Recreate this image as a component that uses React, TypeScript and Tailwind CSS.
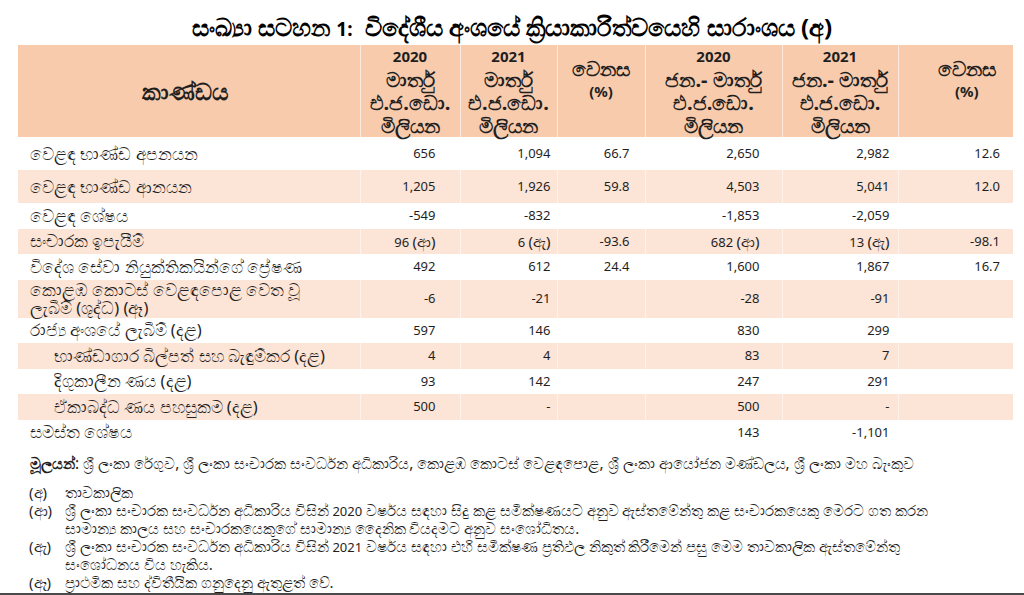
import React from "react";

type Row = {
  label: string[];
  indent?: boolean;
  shaded?: boolean;
  tall?: boolean;
  values: string[];
};

const rows: Row[] = [
  { label: ["වෙළඳ භාණ්ඩ අපනයන"], tall: true, values: ["656", "1,094", "66.7", "2,650", "2,982", "12.6"] },
  { label: ["වෙළඳ භාණ්ඩ ආනයන"], shaded: true, tall: true, values: ["1,205", "1,926", "59.8", "4,503", "5,041", "12.0"] },
  { label: ["වෙළඳ ශේෂය"], values: ["-549", "-832", "", "-1,853", "-2,059", ""] },
  { label: ["සංචාරක ඉපැයීම්"], shaded: true, values: ["96 (ආ)", "6 (ඇ)", "-93.6", "682 (ආ)", "13 (ඇ)", "-98.1"] },
  { label: ["විදේශ සේවා නියුක්තිකයින්ගේ ප්‍රේෂණ"], values: ["492", "612", "24.4", "1,600", "1,867", "16.7"] },
  { label: ["කොළඹ කොටස් වෙළඳපොළ වෙත වූ", "ලැබීම් (ශුද්ධ) (ඈ)"], shaded: true, values: ["-6", "-21", "", "-28", "-91", ""] },
  { label: ["රාජ්‍ය අංශයේ ලැබීම් (දළ)"], values: ["597", "146", "", "830", "299", ""] },
  { label: ["භාණ්ඩාගාර බිල්පත් සහ බැඳුම්කර (දළ)"], indent: true, shaded: true, values: ["4", "4", "", "83", "7", ""] },
  { label: ["දිගුකාලීන ණය (දළ)"], indent: true, values: ["93", "142", "", "247", "291", ""] },
  { label: ["ඒකාබද්ධ ණය පහසුකම (දළ)"], indent: true, shaded: true, values: ["500", "-", "", "500", "-", ""] },
  { label: ["සමස්ත ශේෂය"], values: ["", "", "", "143", "-1,101", ""] },
];

// right padding of each number column so figures line up as in the source
const numPad = ["pr-[24px]", "pr-[6px]", "pr-[15px]", "pr-[22px]", "pr-[8px]", "pr-[13px]"];

const notes = [
  ["(අ)", "තාවකාලික"],
  ["(ආ)", "ශ්‍රී ලංකා සංචාරක සංවර්ධන අධිකාරිය විසින් 2020 වර්ෂය සඳහා සිදු කළ සමීක්ෂණයට අනුව ඇස්තමේන්තු කළ සංචාරකයෙකු මෙරට ගත කරන සාමාන්‍ය කාලය සහ සංචාරකයෙකුගේ සාමාන්‍ය දෛනික වියදමට අනුව  සංශෝධිතය."],
  ["(ඇ)", "ශ්‍රී ලංකා සංචාරක සංවර්ධන අධිකාරිය විසින් 2021 වර්ෂය සඳහා එහි සමීක්ෂණ ප්‍රතිඵල නිකුත් කිරීමෙන් පසු මෙම තාවකාලික ඇස්තමේන්තු සංශෝධනය විය හැකිය."],
  ["(ඈ)", "ප්‍රාථමික සහ ද්විතීයික ගනුදෙනු ඇතුළත් වේ."],
];

// digits are set smaller than the sinhala script around them
function Mixed({ text, num = "text-[13px]" }: { text: string; num?: string }) {
  const parts = text.split(/(\d[\d,.]*)/);
  return (
    <>
      {parts.map((p, i) =>
        /^\d/.test(p) ? (
          <span key={i} className={num}>
            {p}
          </span>
        ) : (
          <React.Fragment key={i}>{p}</React.Fragment>
        )
      )}
    </>
  );
}

function HeadCell({ year, lines, className = "", big = false }: { year?: string; lines: string[]; className?: string; big?: boolean }) {
  return (
    <th className={`border-x border-white/60 text-center align-middle font-bold leading-[23px] ${className}`}>
      {year && <div className="text-[15px]">{year}</div>}
      {lines.map((l, i) => (
        <div key={i} className={l === "(%)" ? "text-[15px]" : big ? "text-[23px]" : "text-[20px]"}>
          {l}
        </div>
      ))}
    </th>
  );
}

export default function App() {
  return (
    <div className="w-[1024px] h-[595px] bg-white text-[#1f1f1f] font-['Noto_Sans','Open_Sans',sans-serif] overflow-hidden">
      <h1 className="pt-[12px] h-[45px] text-center text-[24px] font-bold leading-[30px] text-black">
        සංඛ්‍යා සටහන <span className="text-[19px]">1:</span>&nbsp; විදේශීය අංශයේ ක්‍රියාකාරිත්වයෙහි සාරාංශය (අ)
      </h1>

      <table className="ml-[18px] w-[995px] table-fixed border-collapse text-[13px]">
        <colgroup>
          <col className="w-[342px]" />
          <col className="w-[100px]" />
          <col className="w-[97px]" />
          <col className="w-[88px]" />
          <col className="w-[137px]" />
          <col className="w-[116px]" />
          <col className="w-[115px]" />
        </colgroup>
        <thead>
          <tr className="h-[91px] bg-[#f8cbad]">
            <HeadCell lines={["කාණ්ඩය"]} big className="border-l-0 pr-[6px]" />
            <HeadCell year="2020" lines={["මාර්තු", "එ.ජ.ඩො.", "මිලියන"]} />
            <HeadCell year="2021" lines={["මාර්තු", "එ.ජ.ඩො.", "මිලියන"]} />
            <HeadCell lines={["වෙනස", "(%)"]} className="pb-[22px]" />
            <HeadCell year="2020" lines={["ජන.- මාර්තු", "එ.ජ.ඩො.", "මිලියන"]} />
            <HeadCell year="2021" lines={["ජන.- මාර්තු", "එ.ජ.ඩො.", "මිලියන"]} />
            <HeadCell lines={["වෙනස", "(%)"]} className="border-r-0 pb-[22px] pl-[22px]" />
          </tr>
        </thead>
        <tbody>
          {rows.map((r, i) => (
            <tr
              key={i}
              className={`${r.shaded ? "bg-[#fce4d6]" : "bg-white"} ${
                r.label.length > 1 ? "h-[38px]" : r.tall ? "h-[33px]" : "h-[25.5px]"
              }`}
            >
              <td className={`${r.indent ? "pl-[36px]" : "pl-[12px]"} text-[16.5px] leading-[18px] align-middle`}>
                {r.label.map((l, j) => (
                  <div key={j}>{l}</div>
                ))}
              </td>
              {r.values.map((v, j) => (
                <td
                  key={j}
                  className={`text-right align-middle tabular-nums border-x border-white/50 ${numPad[j]} ${
                    j === 5 ? "border-r-0" : ""
                  }`}
                >
                  {v.includes("(") ? (
                    <>
                      {v.split(" ")[0]} <span className="text-[15px]">{v.split(" ")[1]}</span>
                    </>
                  ) : (
                    v
                  )}
                </td>
              ))}
            </tr>
          ))}
        </tbody>
      </table>

      <p className="mt-[9px] ml-[30px] text-[15.4px] leading-[19px]">
        <span className="font-bold">මූලයන්</span>: ශ්‍රී ලංකා රේගුව, ශ්‍රී ලංකා සංචාරක සංවර්ධන අධිකාරිය, කොළඹ කොටස්
        වෙළඳපොළ, ශ්‍රී ලංකා ආයෝජන මණ්ඩලය, ශ්‍රී ලංකා මහ බැංකුව
      </p>

      <div className="mt-[11px] ml-[29px] w-[940px] text-[15px] leading-[17.5px]">
        {notes.map(([mark, text]) => (
          <div key={mark} className="flex">
            <span className="w-[36px] shrink-0">{mark}</span>
            <span>
              <Mixed text={text} />
            </span>
          </div>
        ))}
      </div>

      <div className="mt-[2px] h-[2px] bg-[#4a4a4a]" />
    </div>
  );
}
